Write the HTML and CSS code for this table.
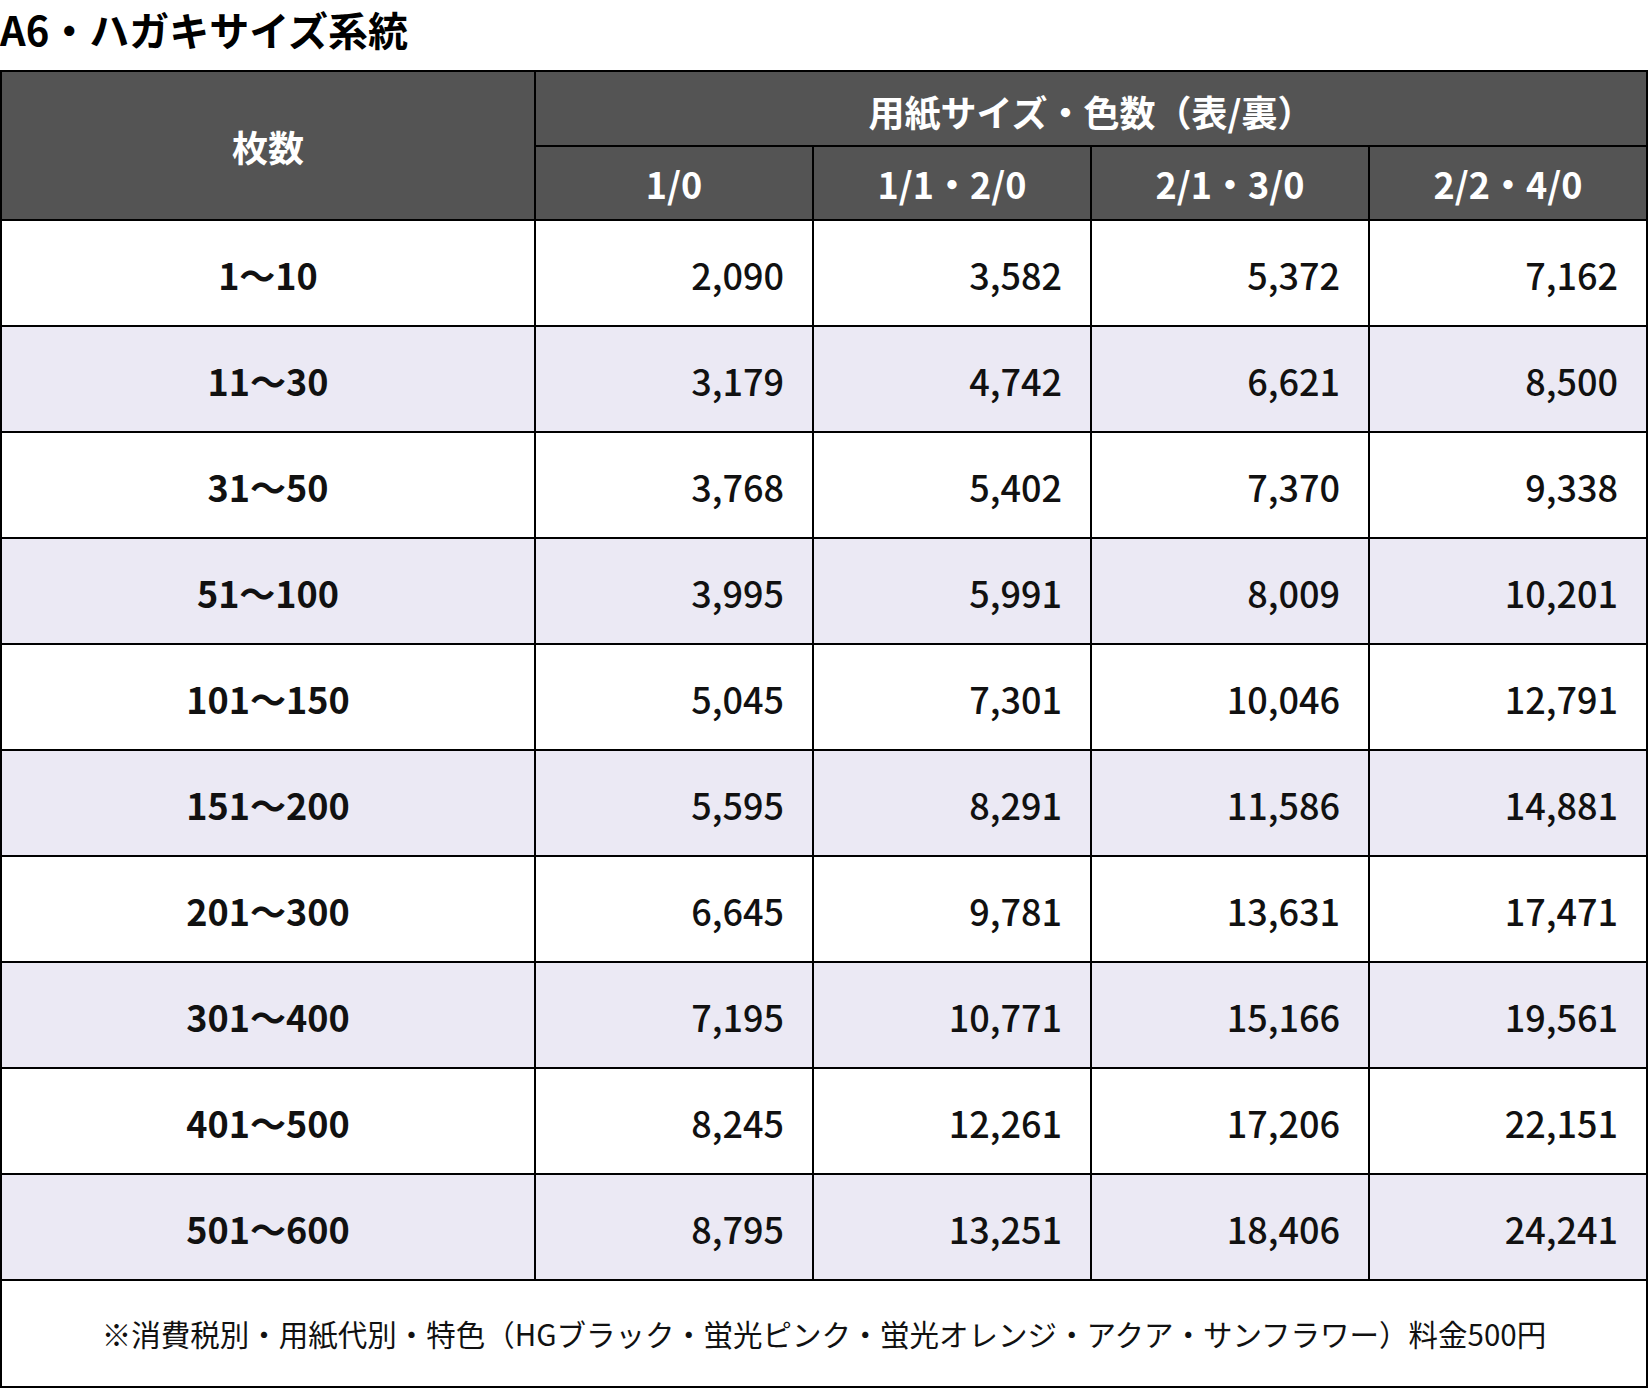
FILE: index.html
```html
<!DOCTYPE html>
<html lang="ja">
<head>
<meta charset="utf-8">
<title>A6・ハガキサイズ系統</title>
<link rel="stylesheet" href="styles.css">
</head>
<body>
<h1 class="title">A6・ハガキサイズ系統</h1>
<div class="price-table">
  <div class="cell head head-qty">枚数</div>
  <div class="cell head head-group">用紙サイズ・色数（表/裏）</div>
  <div class="cell head">1/0</div>
  <div class="cell head">1/1・2/0</div>
  <div class="cell head">2/1・3/0</div>
  <div class="cell head">2/2・4/0</div>

  <div class="row"><div class="cell qty">1〜10</div><div class="cell num">2,090</div><div class="cell num">3,582</div><div class="cell num">5,372</div><div class="cell num">7,162</div></div>
  <div class="row alt"><div class="cell qty">11〜30</div><div class="cell num">3,179</div><div class="cell num">4,742</div><div class="cell num">6,621</div><div class="cell num">8,500</div></div>
  <div class="row"><div class="cell qty">31〜50</div><div class="cell num">3,768</div><div class="cell num">5,402</div><div class="cell num">7,370</div><div class="cell num">9,338</div></div>
  <div class="row alt"><div class="cell qty">51〜100</div><div class="cell num">3,995</div><div class="cell num">5,991</div><div class="cell num">8,009</div><div class="cell num">10,201</div></div>
  <div class="row"><div class="cell qty">101〜150</div><div class="cell num">5,045</div><div class="cell num">7,301</div><div class="cell num">10,046</div><div class="cell num">12,791</div></div>
  <div class="row alt"><div class="cell qty">151〜200</div><div class="cell num">5,595</div><div class="cell num">8,291</div><div class="cell num">11,586</div><div class="cell num">14,881</div></div>
  <div class="row"><div class="cell qty">201〜300</div><div class="cell num">6,645</div><div class="cell num">9,781</div><div class="cell num">13,631</div><div class="cell num">17,471</div></div>
  <div class="row alt"><div class="cell qty">301〜400</div><div class="cell num">7,195</div><div class="cell num">10,771</div><div class="cell num">15,166</div><div class="cell num">19,561</div></div>
  <div class="row"><div class="cell qty">401〜500</div><div class="cell num">8,245</div><div class="cell num">12,261</div><div class="cell num">17,206</div><div class="cell num">22,151</div></div>
  <div class="row alt"><div class="cell qty">501〜600</div><div class="cell num">8,795</div><div class="cell num">13,251</div><div class="cell num">18,406</div><div class="cell num">24,241</div></div>

  <div class="cell note">※消費税別・用紙代別・特色（HGブラック・蛍光ピンク・蛍光オレンジ・アクア・サンフラワー）料金500円</div>
</div>
</body>
</html>
```

FILE: styles.css
```css
html, body {
  margin: 0;
  padding: 0;
  background: #ffffff;
}

body {
  font-family: "Noto Sans CJK JP", "Noto Sans", sans-serif;
  color: #111111;
  width: 1648px;
}

.title {
  margin: 0 0 12px 0;
  font-size: 40px;
  font-weight: 700;
  line-height: normal;
  color: #000000;
}

.price-table {
  display: grid;
  grid-template-columns: 532px repeat(4, 276px);
  grid-template-rows: 73px 72px repeat(10, 104px) 105px;
  gap: 2px;
  padding: 2px;
  background: #000000;
}

.row {
  display: contents;
}

.cell {
  display: flex;
  align-items: center;
  background: #ffffff;
  font-size: 36px;
  line-height: 1;
}

.row.alt .cell {
  background: #ebe9f4;
}

.head {
  background: #545454;
  color: #ffffff;
  font-weight: 700;
  justify-content: center;
}

.head-qty {
  grid-row: span 2;
}

.head-group {
  grid-column: span 4;
  padding-top: 4px;
}

.qty {
  justify-content: center;
  font-weight: 700;
  padding-top: 2px;
}

.num {
  justify-content: flex-end;
  padding-right: 28px;
  padding-top: 2px;
  font-weight: 500;
}

.note {
  grid-column: 1 / -1;
  justify-content: center;
  font-size: 29.5px;
}
```
